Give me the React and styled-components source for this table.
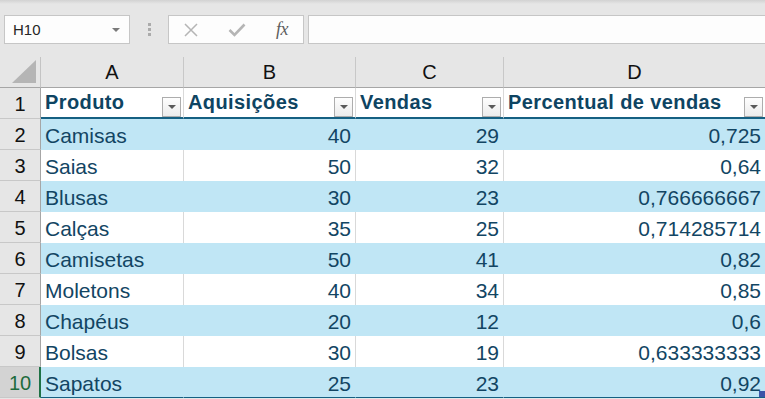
import React from "react";
import styled, { createGlobalStyle } from "styled-components";

const GlobalStyle = createGlobalStyle`
  html, body { margin: 0; padding: 0; background: #e6e6e6; overflow: hidden; }
  #root { width: 765px; height: 399px; overflow: hidden; }
  * { box-sizing: border-box; }
`;

const Window = styled.div`
  width: 765px;
  height: 399px;
  background: #e6e6e6;
  display: flex;
  flex-direction: column;
  font-family: "Liberation Sans", Arial, sans-serif;
  overflow: hidden;
`;

const TopStrip = styled.div`
  height: 4px;
  background: linear-gradient(#d2d2d2, #e6e6e6);
  flex: none;
`;

const FormulaBar = styled.div`
  margin-top: 11px;
  height: 29px;
  display: flex;
  align-items: stretch;
  padding-left: 4px;
  flex: none;
`;

const NameBox = styled.div`
  width: 126px;
  background: #fdfdfd;
  border: 1px solid #c6c6c6;
  display: flex;
  align-items: center;
  justify-content: space-between;
  padding: 0 9px 0 8px;
  font-size: 15px;
  color: #262626;
`;

const Caret = styled.span`
  width: 0;
  height: 0;
  border-left: ${(p) => p.$w || 4}px solid transparent;
  border-right: ${(p) => p.$w || 4}px solid transparent;
  border-top: ${(p) => p.$h || 4}px solid ${(p) => p.$c || "#7a7a7a"};
`;

const Grip = styled.div`
  width: 38px;
  display: flex;
  flex-direction: column;
  align-items: center;
  justify-content: center;
  gap: 2px;
`;

const Dot = styled.span`
  width: 3px;
  height: 3px;
  background: #ababab;
`;

const FxBox = styled.div`
  width: 136px;
  background: #fdfdfd;
  border: 1px solid #c6c6c6;
  display: flex;
  align-items: center;
  padding-left: 14px;
`;

const IconSlot = styled.div`
  width: ${(p) => p.$w}px;
  margin-left: ${(p) => p.$ml || 0}px;
  display: flex;
  align-items: center;
  justify-content: center;
`;

const FxText = styled.span`
  font-family: "Liberation Serif", "Times New Roman", serif;
  font-style: italic;
  font-size: 18px;
  color: #5e5e5e;
  letter-spacing: -0.5px;
`;

const FormulaInput = styled.div`
  flex: 1;
  margin-left: 4px;
  background: #fdfdfd;
  border: 1px solid #c6c6c6;
  border-right: none;
`;

const Sheet = styled.div`
  margin-top: 13px;
  display: grid;
  grid-template-columns: 41px 143px 172px 148px 262px;
  grid-auto-rows: 31px;
`;

const Corner = styled.div`
  background: #e6e6e6;
  border-right: 1px solid #c4c4c4;
  border-bottom: 1px solid #a6a6a6;
  display: flex;
  align-items: flex-end;
  justify-content: flex-end;
  padding: 0 4px 4px 0;
`;

const ColHead = styled.div`
  background: #e6e6e6;
  border-right: 1px solid #c8c8c8;
  border-bottom: 1px solid #a6a6a6;
  display: flex;
  align-items: center;
  justify-content: center;
  font-size: 20px;
  color: #111;
  padding-top: 1px;
`;

const RowHead = styled.div`
  background: ${(p) => (p.$active ? "#d3d3d3" : "#e6e6e6")};
  border-right: ${(p) => (p.$active ? "2px solid #1e7145" : "1px solid #a6a6a6")};
  border-bottom: 1px solid #c8c8c8;
  display: flex;
  align-items: center;
  justify-content: center;
  font-size: 20px;
  color: ${(p) => (p.$active ? "#1e6b3c" : "#111")};
  padding-top: 2px;
  padding-left: ${(p) => (p.$active ? "1px" : "0")};
`;

const HeadCell = styled.div`
  background: #ffffff;
  border-right: 1px solid #d9d9d9;
  border-bottom: 2px solid #156082;
  display: flex;
  align-items: flex-start;
  justify-content: space-between;
  padding: 0 2px 0 4px;
  font-weight: bold;
  font-size: 20px;
  line-height: 29px;
  letter-spacing: 0.4px;
  color: #0e4462;
  white-space: nowrap;
  overflow: hidden;
`;

const FilterButton = styled.div`
  align-self: flex-end;
  flex: none;
  width: 19px;
  height: 20px;
  border: 1px solid #adadad;
  background: linear-gradient(#fefefe, #ececec);
  display: flex;
  align-items: center;
  justify-content: center;
`;

const Cell = styled.div`
  position: relative;
  background: ${(p) => (p.$band ? "#c0e6f5" : "#ffffff")};
  border-right: 1px solid ${(p) => (p.$band ? "#c0e6f5" : "#d9d9d9")};
  border-bottom: ${(p) => (p.$last ? "1px solid #156082" : "none")};
  display: flex;
  align-items: flex-start;
  justify-content: ${(p) => (p.$num ? "flex-end" : "flex-start")};
  padding: 0 4px;
  font-size: 21px;
  line-height: 33px;
  color: #124563;
  white-space: nowrap;
  overflow: hidden;
`;

const Handle = styled.span`
  position: absolute;
  right: 0;
  bottom: 0;
  width: 6px;
  height: 6px;
  background: #3b55a8;
`;

const rows = [
  ["Camisas", 40, 29, "0,725"],
  ["Saias", 50, 32, "0,64"],
  ["Blusas", 30, 23, "0,766666667"],
  ["Calças", 35, 25, "0,714285714"],
  ["Camisetas", 50, 41, "0,82"],
  ["Moletons", 40, 34, "0,85"],
  ["Chapéus", 20, 12, "0,6"],
  ["Bolsas", 30, 19, "0,633333333"],
  ["Sapatos", 25, 23, "0,92"],
];

const headers = ["Produto", "Aquisições", "Vendas", "Percentual de vendas"];

export default function App() {
  return (
    <Window>
      <GlobalStyle />
      <TopStrip />
      <FormulaBar>
        <NameBox>
          <span>H10</span>
          <Caret $w={4} $h={4} $c="#7a7a7a" />
        </NameBox>
        <Grip>
          <Dot />
          <Dot />
          <Dot />
        </Grip>
        <FxBox>
          <IconSlot $w={16}>
            <svg width="14" height="14" viewBox="0 0 14 14">
              <path d="M1 1 L13 13 M13 1 L1 13" stroke="#b5b5b5" strokeWidth="1.5" fill="none" />
            </svg>
          </IconSlot>
          <IconSlot $w={30} $ml={23}>
            <svg width="18" height="14" viewBox="0 0 18 14">
              <path d="M1.5 7 L6.5 12 L16.5 1.5" stroke="#b5b5b5" strokeWidth="2.6" fill="none" />
            </svg>
          </IconSlot>
          <IconSlot $w={30} $ml={15}>
            <FxText>fx</FxText>
          </IconSlot>
        </FxBox>
        <FormulaInput />
      </FormulaBar>
      <Sheet>
        <Corner>
          <svg width="24" height="23" viewBox="0 0 24 23">
            <polygon points="24,0 24,23 0,23" fill="#b5b5b5" />
          </svg>
        </Corner>
        {["A", "B", "C", "D"].map((c) => (
          <ColHead key={c}>{c}</ColHead>
        ))}
        <RowHead>1</RowHead>
        {headers.map((h) => (
          <HeadCell key={h}>
            <span>{h}</span>
            <FilterButton>
              <Caret $w={4} $h={4} $c="#5a5a5a" />
            </FilterButton>
          </HeadCell>
        ))}
        {rows.map((r, i) => {
          const band = i % 2 === 0;
          const last = i === rows.length - 1;
          return (
            <React.Fragment key={r[0]}>
              <RowHead $active={last}>{i + 2}</RowHead>
              <Cell $band={band} $last={last}>{r[0]}</Cell>
              <Cell $band={band} $last={last} $num>{r[1]}</Cell>
              <Cell $band={band} $last={last} $num>{r[2]}</Cell>
              <Cell $band={band} $last={last} $num>
                {r[3]}
                {last && <Handle />}
              </Cell>
            </React.Fragment>
          );
        })}
      </Sheet>
    </Window>
  );
}
